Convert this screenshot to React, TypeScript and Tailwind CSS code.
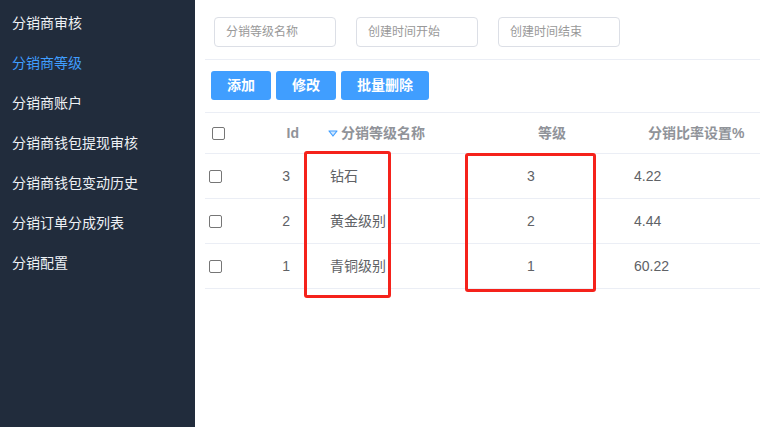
const menu = ["分销商审核", "分销商等级", "分销商账户", "分销商钱包提现审核", "分销商钱包变动历史", "分销订单分成列表", "分销配置"];

const rows = [
  { id: 3, name: "钻石", level: 3, rate: "4.22" },
  { id: 2, name: "黄金级别", level: 2, rate: "4.44" },
  { id: 1, name: "青铜级别", level: 1, rate: "60.22" },
];

const cols = "grid grid-cols-[50px_65px_140px_142px_158px]";

function Box({ className = "" }: { className?: string }) {
  return <span className={`inline-block h-[13px] w-[13px] rounded-[2px] border border-[#767676] bg-white ${className}`} />;
}

export default function App() {
  return (
    <div
      className="relative flex h-screen w-full overflow-hidden bg-white"
      style={{ fontFamily: '"Liberation Sans", "Noto Sans CJK SC", sans-serif' }}
    >
      <aside className="flex h-full w-[195px] shrink-0 flex-col bg-[#212c3c] pt-[3px]">
        {menu.map((m, i) => (
          <div
            key={m}
            className={`h-10 pl-3 text-[14px] leading-10 ${i === 1 ? "text-[#409eff]" : "text-[#eef1f5]"}`}
          >
            {m}
          </div>
        ))}
      </aside>

      <main className="flex min-w-0 flex-1 flex-col pl-[10px]">
        <div className="flex gap-5 border-b border-[#ebeef5] pb-3 pl-[9px] pt-[17px]">
          {["分销等级名称", "创建时间开始", "创建时间结束"].map((p) => (
            <div
              key={p}
              className="flex h-[30px] w-[122px] items-center rounded-[4px] border border-[#dcdfe6] pl-[11px] text-[12px] text-[#999]"
            >
              {p}
            </div>
          ))}
        </div>

        <div className="mt-[11px] flex gap-[5px] pl-[6px]">
          {[
            ["添加", "w-[60px]"],
            ["修改", "w-[60px]"],
            ["批量删除", "w-[88px]"],
          ].map(([t, w]) => (
            <button
              key={t}
              className={`h-[29px] ${w} rounded-[3px] bg-[#409eff] text-[14px] font-bold text-white`}
            >
              {t}
            </button>
          ))}
        </div>

        <div className="mt-[12px] border-t border-[#ebeef5]">
          <div className={`${cols} h-[41px] items-center border-b border-[#ebeef5] text-[14px] font-bold text-[#909399]`}>
            <div className="flex pl-[7px]">
              <Box />
            </div>
            <div className="pr-[21px] text-right">Id</div>
            <div className="flex items-center pl-[8px]">
              <svg width="10" height="7" viewBox="0 0 10 7" className="mr-[3px]">
                <path d="M1 1 L9 1 L5 6 Z" fill="#cfe6ff" stroke="#409eff" strokeWidth="1.2" strokeLinejoin="round" />
              </svg>
              分销等级名称
            </div>
            <div className="pl-[78px]">等级</div>
            <div className="pl-[46px]">分销比率设置%</div>
          </div>
          {rows.map((r) => (
            <div
              key={r.id}
              className={`${cols} h-[45px] items-center border-b border-[#ebeef5] text-[14px] text-[#606266]`}
            >
              <div className="flex pl-[4px]">
                <Box />
              </div>
              <div className="pr-[30px] text-right">{r.id}</div>
              <div className="pl-[10px]">{r.name}</div>
              <div className="text-center">{r.level}</div>
              <div className="pl-[32px]">{r.rate}</div>
            </div>
          ))}
        </div>
      </main>

      <div className="pointer-events-none absolute left-[304px] top-[151px] h-[147px] w-[87px] rounded-[3px] border-[3px] border-[#f5221b]" />
      <div className="pointer-events-none absolute left-[465px] top-[153px] h-[139px] w-[131px] rounded-[3px] border-[3px] border-[#f5221b]" />
    </div>
  );
}
